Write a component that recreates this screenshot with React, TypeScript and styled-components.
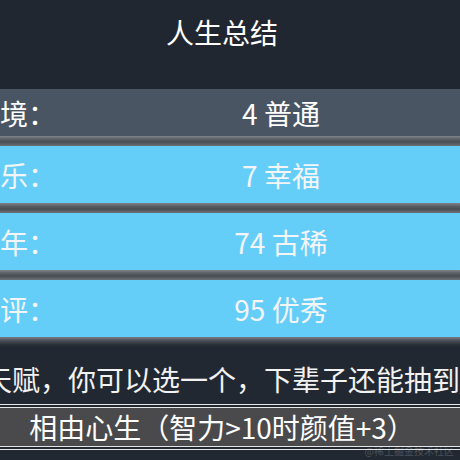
import React from 'react'
import styled, { createGlobalStyle } from 'styled-components'

type Stat = {
  label: string
  value: string
  tone: 'muted' | 'sky'
}

const stats: Stat[] = [
  { label: '家境：', value: '4 普通', tone: 'muted' },
  { label: '快乐：', value: '7 幸福', tone: 'sky' },
  { label: '享年：', value: '74 古稀', tone: 'sky' },
  { label: '总评：', value: '95 优秀', tone: 'sky' },
]

const GlobalStyle = createGlobalStyle`
  html, body {
    margin: 0;
    padding: 0;
    background: #222831;
    overflow: hidden;
  }
  body {
    font-family: 'Noto Sans CJK SC', 'Noto Sans', sans-serif;
  }
`

const App = () => {
  return (
    <>
      <GlobalStyle />
      <Screen>
        <Title>人生总结</Title>
        <StatList>
          {stats.map((s, i) => (
            <React.Fragment key={s.label}>
              <StatRow $tone={s.tone}>
                <Label>{s.label}</Label>
                <Value>{s.value}</Value>
              </StatRow>
              <Divider $last={i === stats.length - 1} />
            </React.Fragment>
          ))}
        </StatList>
        <Hint>天赋，你可以选一个，下辈子还能抽到</Hint>
        <TalentList>
          <Talent>相由心生（智力&gt;10时颜值+3）</Talent>
        </TalentList>
      </Screen>
      <Watermark>@稀土掘金技术社区</Watermark>
    </>
  )
}

export default App

const Screen = styled('div')`
  width: 492px;
  margin-left: -24px;
  height: 460px;
  background: #222831;
  color: #fff;
`

const Title = styled('div')`
  height: 89px;
  box-sizing: border-box;
  padding-top: 12px;
  background: #212730;
  font-size: 28px;
  line-height: 40px;
  text-align: center;
  color: #fff;
`

const StatList = styled('div')`
  display: flex;
  flex-direction: column;
`

const StatRow = styled('div')<{ $tone: 'muted' | 'sky' }>`
  display: grid;
  grid-template-columns: 118px 1fr;
  align-items: center;
  height: ${props => (props.$tone === 'muted' ? '47px' : '57px')};
  background: ${props => (props.$tone === 'muted' ? '#4a5563' : '#64cef9')};
  color: ${props => (props.$tone === 'muted' ? '#ffffff' : '#f3f5f7')};
  font-size: 28px;
  line-height: 36px;
`

const Label = styled('span')`
  text-indent: -4px;
  white-space: nowrap;
`

const Value = styled('span')`
  text-align: center;
  white-space: nowrap;
`

const Divider = styled('div')<{ $last?: boolean }>`
  height: 10px;
  background: ${props =>
    props.$last
      ? 'linear-gradient(to bottom, #7a7e84 0%, #4c5058 35%, #2c3139 75%, #222831 100%)'
      : 'linear-gradient(to bottom, #80848a 0%, #5c6067 30%, #484c53 60%, #6e7177 100%)'};
`

const Hint = styled('div')`
  margin-top: 12px;
  font-size: 28px;
  line-height: 40px;
  text-align: center;
  white-space: nowrap;
  color: #f2f2f2;
`

const TalentList = styled('div')`
  display: flex;
  flex-direction: column;
  margin-top: 8px;
  padding: 0 3px;
`

const Talent = styled('div')`
  background: #4a4a4c;
  border: 1px solid #e6e6e6;
  box-shadow: 0 0 0 2px #222831, 0 0 0 3px #e6e6e6;
  font-size: 28px;
  line-height: 38px;
  text-align: center;
  white-space: nowrap;
  color: #ffffff;
`

const Watermark = styled('div')`
  position: absolute;
  right: 6px;
  bottom: 2px;
  font-size: 10px;
  color: rgba(255, 255, 255, 0.2);
  font-family: 'Noto Sans CJK SC', sans-serif;
`
